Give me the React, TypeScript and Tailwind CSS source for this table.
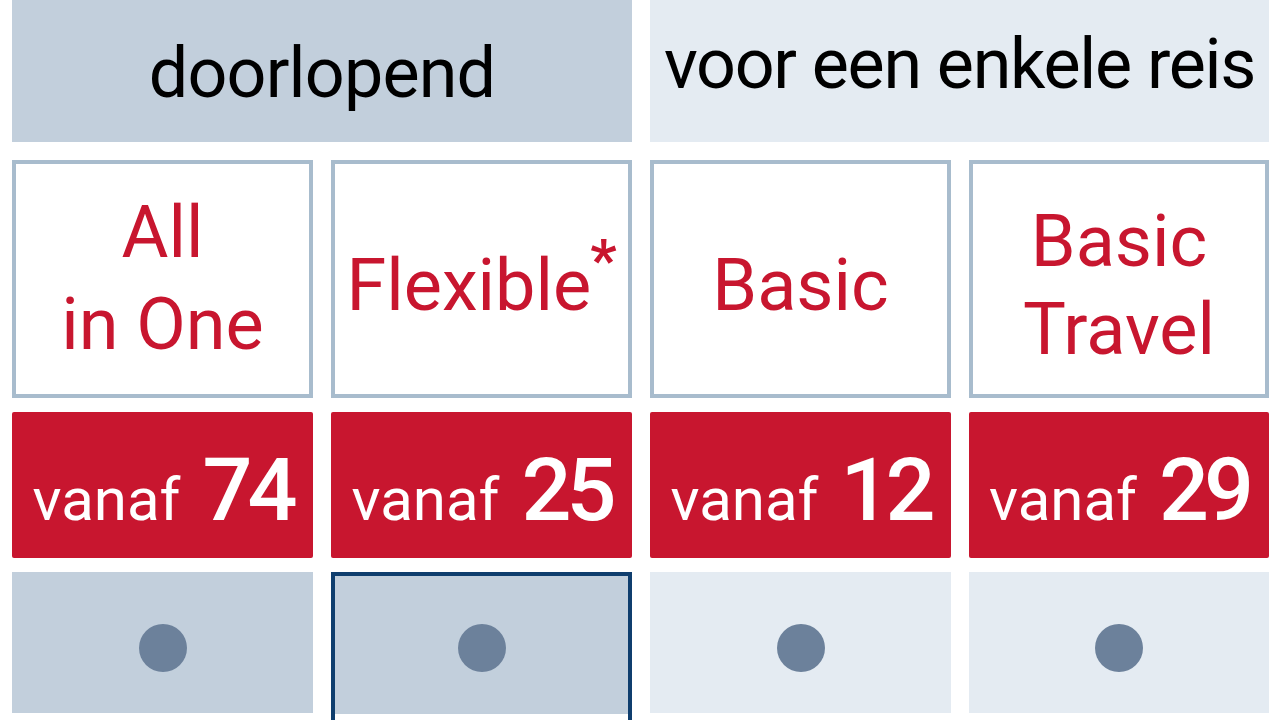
const font = { fontFamily: "Roboto, 'Liberation Sans', sans-serif" };

type Plan = {
  name: React.ReactNode;
  price: string;
  dark: boolean;
  selected?: boolean;
};

const plans: Plan[] = [
  {
    name: (
      <span className="block leading-[92px]">
        All
        <br />
        in One
      </span>
    ),
    price: "74",
    dark: true,
  },
  {
    name: (
      <span className="pt-[14px]">
        Flexible
        <span className="relative -top-[30px] ml-[-1px] text-[58px] font-bold">*</span>
      </span>
    ),
    price: "25",
    dark: true,
    selected: true,
  },
  { name: <span className="pt-[14px]">Basic</span>, price: "12", dark: false },
  {
    name: (
      <span className="block pt-[14px] leading-[88px]">
        Basic
        <br />
        Travel
      </span>
    ),
    price: "29",
    dark: false,
  },
];

function Dot() {
  return <div className="h-12 w-12 rounded-full bg-[#6c819b]" />;
}

export default function App() {
  return (
    <div className="h-[720px] w-[1280px] overflow-hidden bg-white" style={font}>
      <div className="grid grid-cols-[301px_301px_301px_300px] gap-x-[18px] px-3">
        <div className="col-span-2 flex h-[142px] items-center justify-center bg-[#c2cfdc] pt-[4px] text-[70px] tracking-[-0.8px] text-black">
          doorlopend
        </div>
        <div className="col-span-2 flex h-[142px] items-center justify-center bg-[#e4ebf2] pb-[14px] text-[70px] tracking-[-1.3px] text-black">
          voor een enkele reis
        </div>

        {plans.map((p, i) => (
          <div
            key={"c" + i}
            className="mt-[18px] flex h-[238px] items-center justify-center border-4 border-[#a8bccd] bg-white text-center text-[72px] text-[#c8162f]"
          >
            {p.name}
          </div>
        ))}

        {plans.map((p, i) => (
          <div
            key={"p" + i}
            className="mt-[14px] flex h-[146px] items-center justify-center rounded-[2px] bg-[#c8162f] text-white"
          >
            <div className="flex items-baseline gap-[22px] pt-[10px]">
              <span className="text-[60px]">vanaf</span>
              <span className="text-[88px] font-medium tracking-[-5px]">{p.price}</span>
            </div>
          </div>
        ))}

        {plans.map((p, i) =>
          p.selected ? (
            <div key={"d" + i} className="mt-[14px] h-[160px] border-4 border-[#0f3e6e] bg-white">
              <div className="flex h-[138px] items-center justify-center bg-[#c2cfdc] pt-[6px]">
                <Dot />
              </div>
            </div>
          ) : (
            <div
              key={"d" + i}
              className={
                "mt-[14px] flex h-[141px] items-center justify-center pt-[10px] " +
                (p.dark ? "bg-[#c2cfdc]" : "bg-[#e4ebf2]")
              }
            >
              <Dot />
            </div>
          )
        )}
      </div>
    </div>
  );
}
